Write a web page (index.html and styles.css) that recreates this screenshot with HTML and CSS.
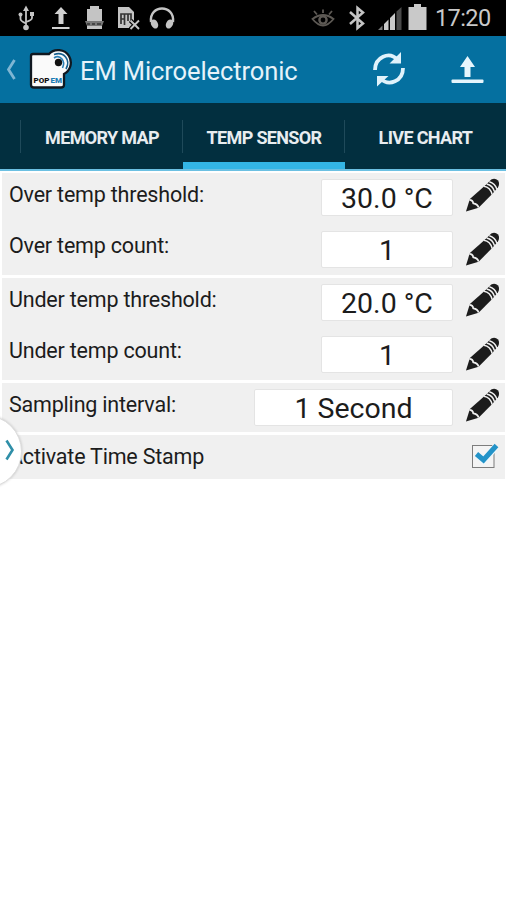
FILE: index.html
```html
<!DOCTYPE html>
<html lang="en">
<head>
    <meta charset="UTF-8">
    <meta name="viewport" content="width=device-width, initial-scale=1.0">
    <title>EM Microelectronic</title>
    <link rel="stylesheet" href="styles.css">
</head>
<body>

<svg class="defs" width="0" height="0">
    <symbol id="pencil" viewBox="0 0 36 36">
        <path d="M1 35 L5 22 L21 8 L29 16 L14 31 Z" fill="#1c1c1c"/>
        <path d="M20 9 L27 2 Q31 0 34 3 Q36 6 34 10 L28 17 Z" fill="#1c1c1c"/>
        <path d="M4.500 23 Q8 23 8.500 26.500 Q13 27 14 31" fill="none" stroke="#f0f0f0" stroke-width="1.800"/>
        <path d="M19.500 9 Q26 10 28 17.500 M22.300 6.700 Q28.500 8 30.500 14.800 M25 4.300 Q31 6 33 12.300" fill="none" stroke="#f0f0f0" stroke-width="1.600"/>
    </symbol>
</svg>

<div class="status-bar">
    <svg width="18" height="36" viewBox="17 0 18 36" fill="none" stroke="#c4c4c4" stroke-width="1.800">
        <path d="M26 9 V27 M20.500 15 V19 Q20.500 21 26 23.500 M32 14 V18 Q32 20 26 22"/>
        <path d="M26 5.500 L29 11 H23 Z M30 12 H34 V16 H30 Z" fill="#c4c4c4" stroke="none"/>
        <circle cx="20.500" cy="14.500" r="2" fill="#c4c4c4" stroke="none"/>
        <circle cx="26" cy="27.500" r="2.800" fill="#c4c4c4" stroke="none"/>
    </svg>
    <svg width="18" height="36" viewBox="52 0 18 36" fill="#d0d0d0">
        <path d="M61 7 L67.500 14 H63.500 V24 H58.500 V14 H54.500 Z M52 27 H69.500 V29 H52 Z"/>
    </svg>
    <svg width="20" height="36" viewBox="85 0 20 36">
        <path d="M90 6 H99 V9 H102 V29 H87 V9 H90 Z" fill="#c4c4c4"/>
        <path d="M85 21 H104 L102 26 H87 Z" fill="#777"/>
        <path d="M87 24 H90 M92 24 H95 M97 24 H101" stroke="#444" stroke-width="2"/>
    </svg>
    <svg width="23" height="36" viewBox="118 0 23 36">
        <path d="M118 7 H129 L134 12 V28 H118 Z" fill="#c4c4c4"/>
        <path d="M121 24 V14 H131 V23 M124.500 14 V25 M128 14 V21 M121 19 H124" fill="none" stroke="#333" stroke-width="1.700"/>
        <path d="M130.500 20.500 L139 29 M139 20.500 L130.500 29" stroke="#000" stroke-width="4.500"/>
        <path d="M130.500 20.500 L139 29 M139 20.500 L130.500 29" stroke="#c4c4c4" stroke-width="1.900"/>
    </svg>
    <svg width="26" height="36" viewBox="149 0 26 36">
        <path d="M151 22 C149 4 175 4 173 22" fill="none" stroke="#c4c4c4" stroke-width="2.400"/>
        <ellipse cx="154.500" cy="24" rx="3.400" ry="4.800" fill="#c4c4c4" transform="rotate(-28 154.500 24)"/>
        <ellipse cx="169.500" cy="24" rx="3.400" ry="4.800" fill="#c4c4c4" transform="rotate(28 169.500 24)"/>
    </svg>
    <div class="status-right">
        <svg width="24" height="36" viewBox="311 0 24 36" fill="none" stroke="#5d5954" stroke-width="1.800">
            <path d="M312.500 19 Q323 11 333.500 19 Q323 32 312.500 19 Z M323 13 V9.500 M317 14.500 L314 11 M329 14.500 L332 11"/>
            <circle cx="323" cy="20" r="3.600" stroke-width="2.400"/>
        </svg>
        <svg width="16" height="36" viewBox="349 0 16 36" fill="none" stroke="#c4c4c4" stroke-width="2.500">
            <path d="M350 12 L363 23.500 L357.500 28 V8 L363 12.500 L350 24"/>
        </svg>
        <svg width="24" height="36" viewBox="378 0 24 36">
            <path d="M378 30 L382.500 25.500 V30 Z" fill="#777"/>
            <path d="M384 24 L388.500 19.500 V30 H384 Z M390 18 L395 13 V30 H390 Z" fill="#c9c9c9"/>
            <path d="M396.500 11.500 L401.500 7 V30 H396.500 Z" fill="#4a4a4a"/>
        </svg>
        <svg width="19" height="36" viewBox="408 0 19 36" fill="#c9c9c9">
            <path d="M414 4 H421 V7 H426.500 V30 H408.500 V7 H414 Z"/>
        </svg>
        <span class="clock">17:20</span>
    </div>
</div>

<div class="app-bar">
    <svg class="back" width="10" height="68" viewBox="6 36 10 68" fill="none" stroke="#7fb6d3" stroke-width="2.800">
        <path d="M14.500 60 L8.500 69.500 L14.500 79"/>
    </svg>
    <svg class="logo" width="44" height="68" viewBox="29 36 44 68">
        <path d="M33 54 H49 C54 48 65 49 69 56 C73 63 70 71 64 74 V85 Q64 87.500 61 87.500 H34 Q31 87.500 31 85 V56 Q31 54 33 54 Z" fill="#fafafa" stroke="#101820" stroke-width="2.300"/>
        <circle cx="58.500" cy="62.500" r="3.700" fill="#111"/>
        <path d="M54 58 C60 54 66 61 62.500 68" fill="none" stroke="#2b7fb5" stroke-width="1.600"/>
        <path d="M54 54.500 C64 51 71 60 66 69" fill="none" stroke="#17608f" stroke-width="1.600"/>
        <text x="33.500" y="83" class="logo-text">POP<tspan fill="#1d7db5" dx="1">EM</tspan></text>
    </svg>
    <h1>EM Microelectronic</h1>
    <svg class="sync" width="34" height="68" viewBox="372 36 34 68" fill="none" stroke="#e0f2fb" stroke-width="3.800">
        <path d="M375 70 C375 57 389 51 397.500 59.500 M403 68 C403 81 389 87 380.500 78.500"/>
        <path d="M401 52 V63.500 H389.500 Z M377 86.500 V76 H388.500 Z" fill="#e0f2fb" stroke="none"/>
    </svg>
    <svg class="upload" width="33" height="68" viewBox="451 36 33 68" fill="#e6f5fc">
        <path d="M467.500 56 L475 67 H470.500 V77 H464.500 V67 H460 Z"/>
        <rect x="451.500" y="79.500" width="32" height="3.500" rx="1"/>
    </svg>
</div>

<div class="tabs">
    <div class="tab edge"></div>
    <div class="tab memory"><span>MEMORY MAP</span></div>
    <div class="tab active"><span>TEMP SENSOR</span></div>
    <div class="tab chart"><span>LIVE CHART</span></div>
</div>

<div class="settings">
    <div class="group">
        <div class="row">
            <label>Over temp threshold:</label>
            <div class="value">30.0 °C</div>
            <svg class="edit"><use href="#pencil"/></svg>
        </div>
        <div class="row">
            <label>Over temp count:</label>
            <div class="value">1</div>
            <svg class="edit"><use href="#pencil"/></svg>
        </div>
    </div>
    <div class="group">
        <div class="row">
            <label>Under temp threshold:</label>
            <div class="value">20.0 °C</div>
            <svg class="edit"><use href="#pencil"/></svg>
        </div>
        <div class="row">
            <label>Under temp count:</label>
            <div class="value">1</div>
            <svg class="edit"><use href="#pencil"/></svg>
        </div>
    </div>
    <div class="group single">
        <div class="row">
            <label>Sampling interval:</label>
            <div class="value wide">1 Second</div>
            <svg class="edit"><use href="#pencil"/></svg>
        </div>
    </div>
    <div class="group stamp">
        <label>Activate Time Stamp</label>
        <svg width="28" height="28" viewBox="471 443 28 28">
            <rect x="472.500" y="445.500" width="21.500" height="22" fill="#f4f4f4" stroke="#7d7d7d"/>
            <path d="M477 455 L483.500 460.500 L496 446.500" fill="none" stroke="#eef6fa" stroke-width="7"/>
            <path d="M476.500 454 L483.500 460 L496.500 445.500" fill="none" stroke="#2393c8" stroke-width="5"/>
        </svg>
    </div>
    <div class="drawer-handle">
        <svg width="10" height="22" viewBox="0 0 10 22" fill="none" stroke="#2f8fa8" stroke-width="2.600">
            <path d="M1.500 1.500 L7.500 11 L1.500 20.500"/>
        </svg>
    </div>
</div>

</body>
</html>
```
FILE: styles.css
```css
body {
    margin: 0;
    height: 900px;
    overflow: hidden;
    background: #fff;
    font-family: Roboto, sans-serif;
    color: #1c1c1c;
}
svg {
    display: block;
    flex-shrink: 0;
}
.defs {
    position: absolute;
}
.status-bar {
    display: flex;
    height: 36px;
    padding: 0 15px 0 17px;
    background: #000;
    box-sizing: border-box;
}
.status-bar > svg {
    margin-right: 17px;
}
.status-bar > svg:nth-child(2) {
    margin-right: 15px;
}
.status-bar > svg:nth-child(3) {
    margin-right: 13px;
}
.status-bar > svg:nth-child(4) {
    margin-right: 8px;
}
.status-right {
    display: flex;
    margin-left: auto;
}
.status-right svg:nth-child(1) {
    margin-right: 14px;
}
.status-right svg:nth-child(2) {
    margin-right: 13px;
}
.status-right svg:nth-child(3) {
    margin-right: 6px;
}
.clock {
    width: 56px;
    margin-left: 8px;
    font-size: 23.5px;
    line-height: 36px;
    letter-spacing: -0.6px;
    color: #c9c9c9;
    white-space: nowrap;
}
.app-bar {
    display: flex;
    height: 67px;
    background: #0570a0;
    padding: 0 22px 0 6px;
}
.logo {
    margin-left: 13px;
}
.logo-text {
    font-size: 8px;
    font-weight: 900;
    fill: #111;
}
h1 {
    margin: 0 auto 0 7px;
    font-size: 25.5px;
    font-weight: 400;
    line-height: 70px;
    letter-spacing: -0.1px;
    color: #e6f3fa;
    white-space: nowrap;
}
.upload {
    margin-left: 45px;
}
.tabs {
    display: flex;
    height: 68px;
    background: #022f3f;
    border-bottom: 2px solid #6cc0e2;
    box-sizing: border-box;
}
.tab {
    display: flex;
    justify-content: center;
    align-items: center;
    position: relative;
    box-sizing: border-box;
    font-size: 18px;
    font-weight: 700;
    letter-spacing: -0.65px;
    color: #e8edf0;
    white-space: nowrap;
    padding-top: 3px;
}
.tab:not(:last-child)::after {
    content: "";
    position: absolute;
    right: 0;
    top: 17px;
    width: 1px;
    height: 33px;
    background: #1f4a5a;
}
.edge {
    width: 21px;
}
.memory {
    width: 162px;
}
.active {
    width: 162px;
    border-bottom: 7px solid #33b5e5;
    padding-top: 10px;
}
.chart {
    width: 161px;
}
.settings {
    position: relative;
    padding: 2px 1px 0 2px;
}
.group {
    height: 102px;
    margin-bottom: 3px;
    background: #f0f0f0;
}
.single {
    height: 49px;
}
.row {
    display: flex;
    height: 51px;
    padding: 4px 5px 0 7px;
    box-sizing: border-box;
}
label {
    margin-right: auto;
    font-size: 21.5px;
    line-height: 35px;
    letter-spacing: -0.2px;
    white-space: nowrap;
}
.value {
    width: 132px;
    height: 37px;
    margin: 2px 12px 0 0;
    box-sizing: border-box;
    border: 1px solid #e4e4e4;
    border-radius: 2px;
    background: #fff;
    font-size: 28.5px;
    line-height: 37px;
    text-align: center;
    white-space: nowrap;
}
.row + .row .value {
    margin-top: 3px;
}
.wide {
    width: 199px;
}
.edit {
    width: 35px;
    height: 36px;
}
.row + .row .edit {
    margin-top: 3px;
}
.stamp {
    display: flex;
    align-items: center;
    height: 44px;
    padding: 0 6px 0 7px;
}
.stamp label {
    margin-top: -2px;
}
/* pull-out drawer tab on the left edge */
.drawer-handle {
    position: absolute;
    left: -51px;
    top: 244px;
    width: 73px;
    height: 73px;
    box-sizing: border-box;
    border: 1px solid #ddd;
    border-radius: 50%;
    background: #fff;
    box-shadow: 0 0 3px rgba(0, 0, 0, 0.2);
}
.drawer-handle svg {
    margin: 23px 0 0 55px;
}
```
